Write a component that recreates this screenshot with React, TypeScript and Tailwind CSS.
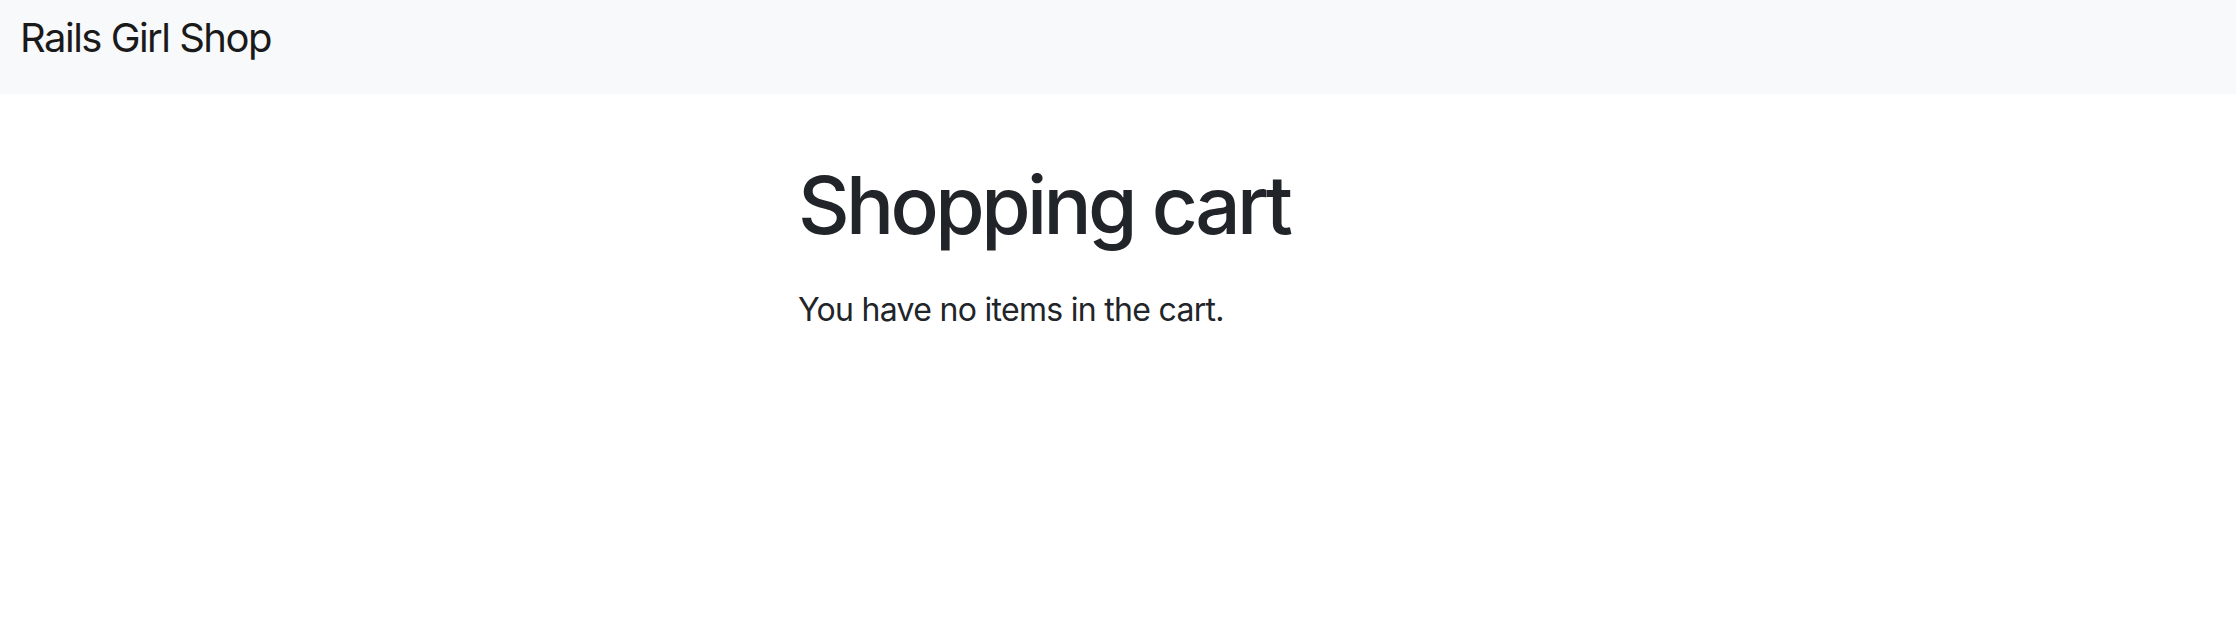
export default function App() {
  return (
    <div className="min-h-screen bg-white font-['Inter',sans-serif] text-[#212529]">
      <nav className="flex h-[94px] items-start bg-[#f8f9fa] px-[20px] pt-[8px]">
        <a href="#" className="text-[40px] leading-[60px] tracking-[-0.038em] text-[#1a1a1a]">
          Rails Girl Shop
        </a>
      </nav>
      <main className="mx-auto w-[640px] pt-[63px]">
        <h1 className="mb-[33px] text-[80px] font-medium leading-[96px] tracking-[-0.045em]">
          Shopping cart
        </h1>
        <p className="text-[32px] leading-[48px] tracking-[-0.022em]">You have no items in the cart.</p>
      </main>
    </div>
  );
}
